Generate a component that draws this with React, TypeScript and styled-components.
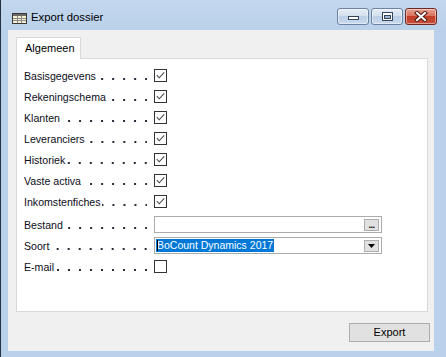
import React from "react";
import styled, { createGlobalStyle } from "styled-components";

const Global = createGlobalStyle`
  html, body { margin: 0; padding: 0; background: #b9d1ea; }
  body {
    width: 446px; height: 357px; overflow: hidden;
    font-family: "Liberation Sans", Arial, sans-serif;
    color: #000;
  }
`;

const Window = styled.div`
  width: 446px;
  height: 357px;
  box-sizing: border-box;
  background: linear-gradient(#c3d7ed, #b9d1ea 30px);
  border-left: 1px solid #24303d;
  display: flex;
  flex-direction: column;
`;

const TitleBar = styled.div`
  height: 30px;
  box-sizing: border-box;
  padding: 8px 9px 0 11px;
  display: flex;
  align-items: flex-start;
  flex-shrink: 0;
`;

const TitleIcon = styled.svg`
  margin-top: 5px;
  margin-right: 4px;
  flex-shrink: 0;
`;

const TitleText = styled.span`
  font-size: 11.3px;
  line-height: 18px;
  color: #000;
`;

const Caption = styled.div`
  margin-left: auto;
  display: flex;
  gap: 2px;
`;

const CapButton = styled.div<{ $close?: boolean }>`
  width: 32px;
  height: 17px;
  box-sizing: border-box;
  border-radius: 3px;
  border: 1px solid ${(p) => (p.$close ? "#6e2a22" : "#6c84a2")};
  background: ${(p) =>
    p.$close
      ? "linear-gradient(#e9a08e 0%, #d8735f 45%, #c23c26 50%, #c9503a 100%)"
      : "linear-gradient(#e5edf7 0%, #d3e0ef 45%, #bccfe6 50%, #c9d9ee 100%)"};
  box-shadow: inset 0 0 0 1px rgba(255, 255, 255, 0.45);
  display: flex;
  align-items: center;
  justify-content: center;
`;

const Client = styled.div`
  flex: 1;
  margin: 0 12px 6px 7px;
  background: #f0f0f0;
  padding: 7px 4px 0 8px;
  display: flex;
  flex-direction: column;
`;

const TabStrip = styled.div`
  display: flex;
  position: relative;
  z-index: 1;
`;

const Tab = styled.div`
  width: 65px;
  height: 22px;
  box-sizing: border-box;
  border: 1px solid #d9d9d9;
  border-bottom: none;
  background: #fff;
  font-size: 11px;
  line-height: 20px;
  padding-left: 8px;
  margin-bottom: -1px;
`;

const Panel = styled.div`
  height: 254px;
  box-sizing: border-box;
  border: 1px solid #d9d9d9;
  background: #fff;
  margin-right: 2px;
  padding: 6px 7px;
`;

const Group = styled.div<{ $gap?: number }>`
  display: grid;
  grid-template-columns: 130px 1fr;
  grid-auto-rows: 21px;
  align-items: center;
  margin-top: ${(p) => p.$gap ?? 0}px;
`;

const LabelCell = styled.div`
  display: flex;
  align-items: center;
  padding-right: 7px;
  height: 100%;
`;

const LabelText = styled.span`
  font-size: 10.6px;
  white-space: nowrap;
  color: #0d0d20;
`;

const Leader = styled.span`
  flex: 1;
  align-self: center;
  height: 2px;
  margin-top: 7px;
  margin-left: 1px;
  background-image: linear-gradient(to left, #2a2a3a 1.5px, transparent 1.5px);
  background-size: 11px 1.5px;
  background-position: right top;
  background-repeat: repeat-x;
`;

const CheckBox = styled.div`
  width: 13px;
  height: 13px;
  box-sizing: border-box;
  border: 1px solid #333;
  background: #fff;
  display: flex;
  align-items: center;
  justify-content: center;
`;

const Field = styled.div`
  width: 228px;
  height: 17px;
  box-sizing: border-box;
  border: 1px solid #ababab;
  background: #fff;
  display: flex;
  align-items: center;
  padding: 0 2px 0 1px;
  position: relative;
`;

const Selected = styled.span`
  background: #0078d7;
  color: #fff;
  font-size: 10.5px;
  line-height: 13px;
  padding: 0 1px;
  white-space: nowrap;
`;

const Caret = styled.span`
  position: absolute;
  left: 2px;
  top: 2px;
  width: 1px;
  height: 11px;
  background: #000;
`;

const MiniButton = styled.div`
  margin-left: auto;
  width: 15px;
  height: 12px;
  box-sizing: border-box;
  border: 1px solid #adadad;
  background: #e1e1e1;
  display: flex;
  align-items: center;
  justify-content: center;
  font-size: 9px;
  font-weight: bold;
  line-height: 8px;
  letter-spacing: -0.5px;
`;

const Footer = styled.div`
  display: flex;
  justify-content: flex-end;
  margin-top: 11px;
`;

const PushButton = styled.div`
  width: 81px;
  height: 19px;
  box-sizing: border-box;
  border: 1px solid #adadad;
  background: #e1e1e1;
  font-size: 11px;
  line-height: 17px;
  text-align: center;
  color: #000;
`;

const Check = () => (
  <svg width="11" height="11" viewBox="0 0 11 11">
    <polyline points="1.8,5.2 4.2,7.8 9.2,2.4" fill="none" stroke="#4a4a4a" strokeWidth="1.1" />
  </svg>
);

const checks = [
  "Basisgegevens",
  "Rekeningschema",
  "Klanten",
  "Leveranciers",
  "Historiek",
  "Vaste activa",
  "Inkomstenfiches",
];

const Label = ({ text }: { text: string }) => (
  <LabelCell>
    <LabelText>{text}</LabelText>
    <Leader />
  </LabelCell>
);

export default function App() {
  return (
    <>
      <Global />
      <Window>
        <TitleBar>
          <TitleIcon width="15" height="11" viewBox="0 0 15 11">
            <rect x="0.5" y="0.5" width="14" height="10" fill="#f6efcf" stroke="#3a3a3a" />
            <rect x="1" y="1" width="13" height="2" fill="#6a6a6a" />
            <line x1="1" y1="5.5" x2="14" y2="5.5" stroke="#8c8c8c" />
            <line x1="1" y1="7.5" x2="14" y2="7.5" stroke="#8c8c8c" />
            <line x1="5.5" y1="3" x2="5.5" y2="10" stroke="#8c8c8c" />
            <line x1="9.5" y1="3" x2="9.5" y2="10" stroke="#8c8c8c" />
          </TitleIcon>
          <TitleText>Export dossier</TitleText>
          <Caption>
            <CapButton>
              <svg width="11" height="9" viewBox="0 0 11 9">
                <rect x="0.5" y="4.5" width="10" height="3" fill="#fff" stroke="#34465c" />
              </svg>
            </CapButton>
            <CapButton>
              <svg width="11" height="9" viewBox="0 0 11 9">
                <rect x="0.5" y="0.5" width="10" height="8" fill="#fff" stroke="#34465c" />
                <rect x="2.5" y="3.5" width="6" height="3" fill="#9fb5cf" stroke="#34465c" />
              </svg>
            </CapButton>
            <CapButton $close>
              <svg width="14" height="11" viewBox="0 0 14 11">
                <path d="M3 2 L11 9 M11 2 L3 9" stroke="#4a1a14" strokeWidth="4" strokeLinecap="square" />
                <path d="M3 2 L11 9 M11 2 L3 9" stroke="#fff" strokeWidth="2" strokeLinecap="square" />
              </svg>
            </CapButton>
          </Caption>
        </TitleBar>
        <Client>
          <TabStrip>
            <Tab>Algemeen</Tab>
          </TabStrip>
          <Panel>
            <Group>
              {checks.map((c) => (
                <React.Fragment key={c}>
                  <Label text={c} />
                  <CheckBox>
                    <Check />
                  </CheckBox>
                </React.Fragment>
              ))}
            </Group>
            <Group $gap={2}>
              <Label text="Bestand" />
              <Field>
                <MiniButton>...</MiniButton>
              </Field>
              <Label text="Soort" />
              <Field>
                <Caret />
                <Selected>BoCount Dynamics 2017</Selected>
                <MiniButton>
                  <svg width="7" height="4" viewBox="0 0 7 4">
                    <polygon points="0,0 7,0 3.5,4" fill="#000" />
                  </svg>
                </MiniButton>
              </Field>
              <Label text="E-mail" />
              <CheckBox />
            </Group>
          </Panel>
          <Footer>
            <PushButton>Export</PushButton>
          </Footer>
        </Client>
      </Window>
    </>
  );
}
